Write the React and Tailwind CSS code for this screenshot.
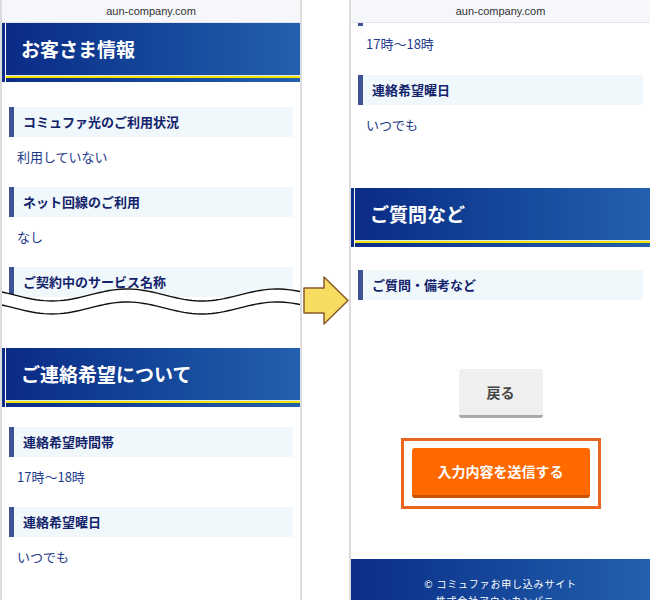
import React from 'react';

const jp = "font-['Noto_Sans_CJK_JP','Noto_Sans',sans-serif]";

function TopBar() {
  return (
    <div className="h-[23px] bg-[#f6f7fb] border-b border-[#e3e5ea] flex items-center justify-center text-[11px] text-[#333] font-['Liberation_Sans',sans-serif]">
      aun-company.com
    </div>
  );
}

function SectionHeader({ title, className = '' }) {
  return (
    <div className={`flex h-[59px] ${className}`}>
      <div className="w-[3px] bg-[#0c2d88]"></div>
      <div className="w-[1px] bg-white"></div>
      <div className="flex-1 flex flex-col">
        <div className="h-[52px] bg-gradient-to-r from-[#0b2b86] to-[#2360ad] flex items-center pl-[15px]">
          <span className={`text-[19px] font-bold text-white ${jp}`}>{title}</span>
        </div>
        <div className="h-[1px] bg-[#dfe6f3]"></div>
        <div className="h-[2px] bg-[#f2e400]"></div>
        <div className="h-[4px] bg-gradient-to-r from-[#0c2d88] to-[#2360ad]"></div>
      </div>
    </div>
  );
}

function SubHeading({ label, className = '' }) {
  return (
    <div className={`mx-[7px] flex h-[30px] ${className}`}>
      <div className="w-[5px] bg-[#3d5393]"></div>
      <div className="flex-1 bg-[#f0f8fc] flex items-center pl-[9px]">
        <span className={`text-[13px] font-bold text-[#13236b] ${jp}`}>{label}</span>
      </div>
    </div>
  );
}

function Value({ text, className = '' }) {
  return (
    <div className={`pl-[15px] text-[13px] leading-[20px] text-[#1d3a8a] ${jp} ${className}`}>{text}</div>
  );
}

function Field({ label, value, first }) {
  return (
    <div>
      <SubHeading label={label} className={first ? 'mt-[25px]' : 'mt-[20px]'} />
      <Value text={value} className="mt-[10px]" />
    </div>
  );
}

function Wave() {
  // two wavy cut lines, white below the upper one
  const pts = (offset) => {
    const out = [];
    for (let x = -2; x <= 302; x += 4) {
      const y = offset - 6 * Math.cos((2 * Math.PI * (x - 125)) / 150);
      out.push(`${x},${y.toFixed(2)}`);
    }
    return out;
  };
  const top = pts(14);
  const bottom = pts(27);
  return (
    <svg className="absolute left-0 top-[281px]" width="300" height="44" viewBox="0 0 300 44">
      <path d={`M${top.join(' L')} L302,44 L-2,44 Z`} fill="#fff" />
      <path d={`M${top.join(' L')}`} fill="none" stroke="#111" strokeWidth="1.4" />
      <path d={`M${bottom.join(' L')}`} fill="none" stroke="#111" strokeWidth="1.4" />
    </svg>
  );
}

export default function App() {
  return (
    <div className="w-[650px] h-[600px] overflow-hidden bg-white flex">
      {/* Left phone */}
      <div className="relative w-[302px] h-[600px] border-x-2 border-[#dcdcdc] overflow-hidden shrink-0">
        <TopBar />
        <SectionHeader title="お客さま情報" />
        <Field label="コミュファ光のご利用状況" value="利用していない" first />
        <Field label="ネット回線のご利用" value="なし" />
        <SubHeading label="ご契約中のサービス名称" className="mt-[20px]" />
        <SectionHeader title="ご連絡希望について" className="mt-[51px]" />
        <Field label="連絡希望時間帯" value="17時〜18時" first={false} />
        <Field label="連絡希望曜日" value="いつでも" />
        <Wave />
      </div>

      {/* Arrow */}
      <div className="w-[47px] shrink-0 pt-[276px] pl-[1px]">
        <svg width="46" height="49" viewBox="0 0 46 49">
          <polygon
            points="1,12 21,12 21,1 45,24.5 21,48 21,37 1,37"
            fill="#f8dc62"
            stroke="#8a5a2c"
            strokeWidth="1.5"
            strokeLinejoin="round"
          />
        </svg>
      </div>

      {/* Right phone */}
      <div className="w-[301px] h-[600px] border-l-2 border-[#dcdcdc] overflow-hidden shrink-0">
        <TopBar />
        <div className="ml-[7px] w-[5px] h-[3px] bg-[#3d5393]"></div>
        <Value text="17時〜18時" className="mt-[8px]" />
        <SubHeading label="連絡希望曜日" className="mt-[21px]" />
        <Value text="いつでも" className="mt-[10px]" />
        <SectionHeader title="ご質問など" className="mt-[53px]" />
        <SubHeading label="ご質問・備考など" className="mt-[23px]" />
        <div className="flex flex-col items-center">
          <button className={`mt-[69px] w-[84px] h-[49px] rounded-[3px] bg-[#efefef] border-b-[3px] border-[#a9a9a9] text-[14px] font-bold text-[#444] ${jp}`}>
            戻る
          </button>
          <div className="mt-[20px] w-[200px] h-[71px] border-[3px] border-[#e8661f] pt-[7px] pl-[8px]">
            <button className={`w-[178px] h-[50px] rounded-[3px] bg-[#ff6900] border-b-[3px] border-[#c85200] text-[14px] font-bold text-white ${jp}`}>
              入力内容を送信する
            </button>
          </div>
        </div>
        <div className={`mt-[50px] h-[60px] bg-gradient-to-r from-[#0c2d88] to-[#2360ad] pt-[16px] flex flex-col items-center text-[10px] leading-[17px] tracking-[0.08em] text-white ${jp}`}>
          <div>© コミュファお申し込みサイト</div>
          <div>株式会社アウンカンパニー</div>
        </div>
      </div>
    </div>
  );
}
